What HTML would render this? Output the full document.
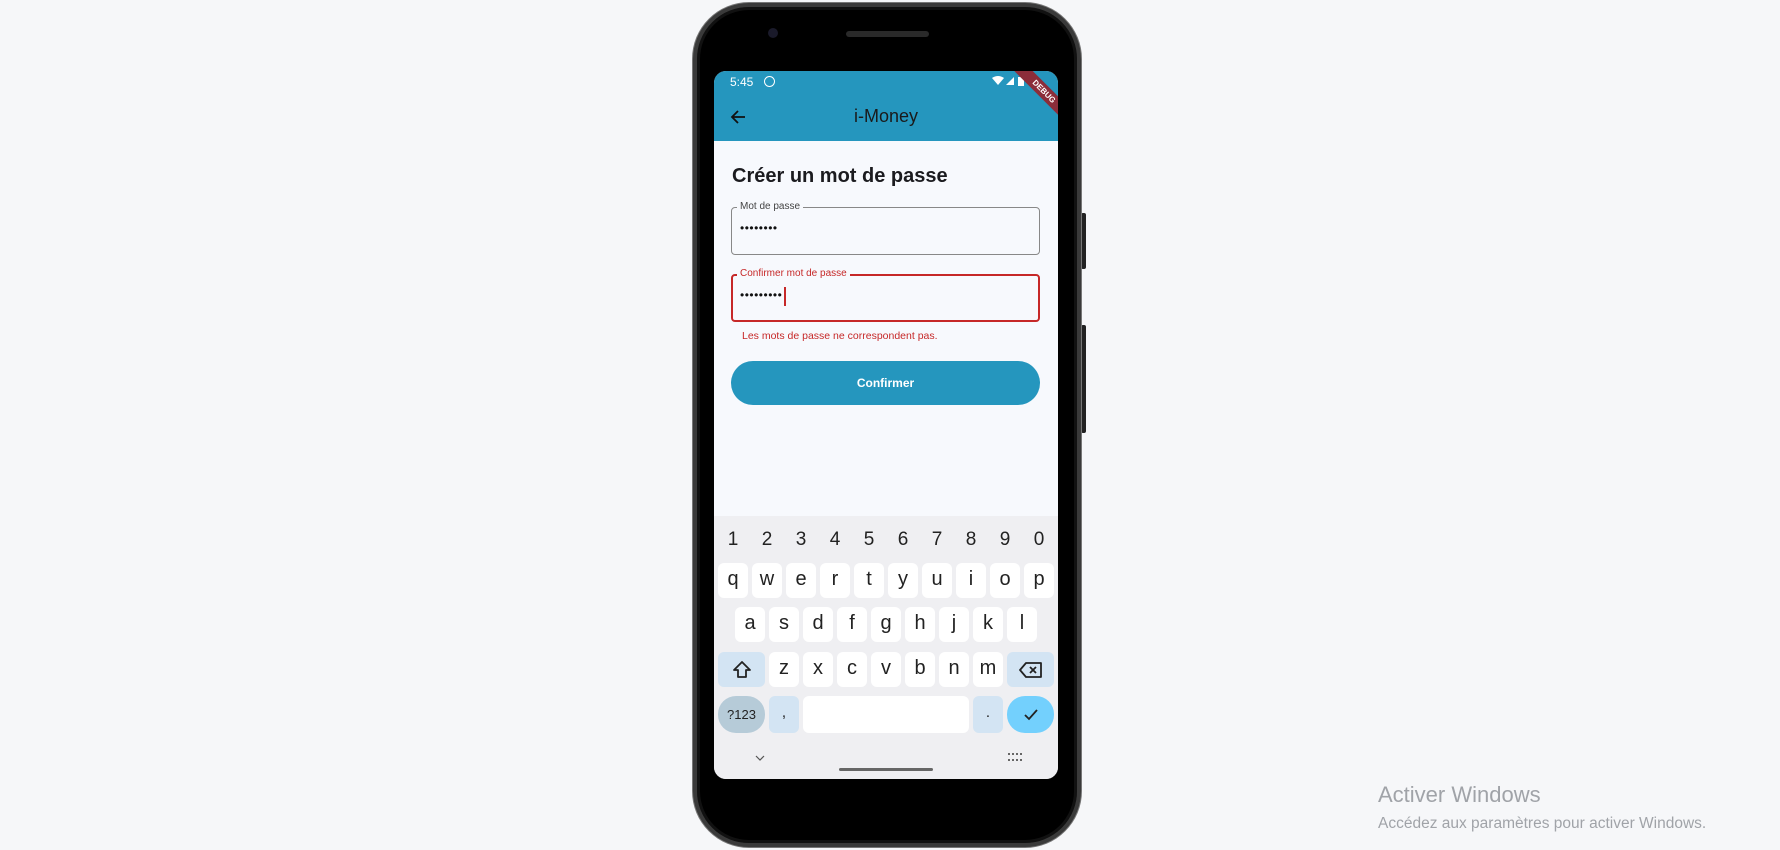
<!DOCTYPE html>
<html><head><meta charset="utf-8"><style>
*{margin:0;padding:0;box-sizing:border-box}
body{width:1780px;height:850px;background:#f6f7f9;font-family:"Liberation Sans",Roboto,sans-serif;position:relative;overflow:hidden}
.abs{position:absolute}
.phone{left:693px;top:3px;width:388px;height:844px;background:#000;border-radius:56px;border:4px solid #3a3a3a;box-shadow:0 0 0 1px #777,0 0 0 3px #111 inset}
.screen{left:714px;top:71px;width:344px;height:708px;background:#f7f9fd;border-radius:12px;overflow:hidden}
.appbar{left:0;top:0;width:344px;height:70px;background:#2596be}
.key{position:absolute;background:#fff;border-radius:6px;width:30px;height:35px;text-align:center;font-size:20px;line-height:33px;color:#222}
.num{position:absolute;top:458px;font-size:19px;color:#222;width:30px;text-align:center}
</style></head><body>
<div class="abs" style="left:1081px;top:213px;width:5px;height:56px;background:#222;border-radius:2px"></div>
<div class="abs" style="left:1081px;top:325px;width:5px;height:108px;background:#222;border-radius:2px"></div>
<div class="abs phone"></div>
<div class="abs" style="left:768px;top:28px;width:10px;height:10px;border-radius:50%;background:#1a1a2a"></div>
<div class="abs" style="left:846px;top:31px;width:83px;height:6px;border-radius:3px;background:#2a2a2a"></div>
<div class="abs screen">
 <div class="abs appbar">
  <div class="abs" style="left:16px;top:4px;color:#fff;font-size:12px">5:45</div>
  <div class="abs" style="left:50px;top:5px;width:11px;height:11px;border:1.5px solid #fff;border-radius:50%"></div>
  <svg class="abs" style="left:278px;top:4px" width="44" height="12"><path d="M0 3 Q6 -1 12 3 L6 10Z" fill="#fff"/><path d="M14 10 L22 2 V10Z" fill="#fff"/><rect x="26" y="2" width="6" height="9" fill="#fff"/></svg>
  <div class="abs" style="left:290px;top:14px;width:80px;height:13px;background:#8b2d3a;transform:rotate(45deg);color:#fff;font-size:8px;font-weight:bold;text-align:center;line-height:13px">DEBUG</div>
  <svg class="abs" style="left:15px;top:37px" width="18" height="18"><path d="M16 9H3M9 3L3 9l6 6" stroke="#111" stroke-width="1.8" fill="none"/></svg>
  <div class="abs" style="left:0;width:344px;top:35px;text-align:center;font-size:18px;color:#1a1a1a">i-Money</div>
 </div>
 <div class="abs" style="left:18px;top:94px;font-size:20px;font-weight:bold;color:#1b1b1f">Créer un mot de passe</div>
 <div class="abs" style="left:17px;top:136px;width:309px;height:48px;border:1px solid #888;border-radius:4px"></div>
 <div class="abs" style="left:23px;top:130px;padding:0 3px;background:#f7f9fd;font-size:10px;color:#444">Mot de passe</div>
 <div class="abs" style="left:26px;top:150px;font-size:12px;color:#111;letter-spacing:0.5px">••••••••</div>
 <div class="abs" style="left:17px;top:203px;width:309px;height:48px;border:2px solid #c62828;border-radius:4px"></div>
 <div class="abs" style="left:23px;top:197px;padding:0 3px;background:#f7f9fd;font-size:10px;color:#c62828">Confirmer mot de passe</div>
 <div class="abs" style="left:26px;top:217px;font-size:12px;color:#111;letter-spacing:0.5px">•••••••••</div>
 <div class="abs" style="left:70px;top:216px;width:1.5px;height:19px;background:#c62828"></div>
 <div class="abs" style="left:28px;top:259px;font-size:10.5px;color:#c62828">Les mots de passe ne correspondent pas.</div>
 <div class="abs" style="left:17px;top:290px;width:309px;height:44px;border-radius:22px;background:#2596be;color:#fff;font-size:12px;font-weight:bold;text-align:center;line-height:44px">Confirmer</div>
 <div class="abs" style="left:0;top:445px;width:344px;height:263px;background:#efeff2"></div>
 <div class="abs" style="left:0;top:0;width:344px;height:708px">
  <div class="num" style="left:4px">1</div><div class="num" style="left:38px">2</div><div class="num" style="left:72px">3</div><div class="num" style="left:106px">4</div><div class="num" style="left:140px">5</div><div class="num" style="left:174px">6</div><div class="num" style="left:208px">7</div><div class="num" style="left:242px">8</div><div class="num" style="left:276px">9</div><div class="num" style="left:310px">0</div>
  <div class="key" style="left:4px;top:492px">q</div><div class="key" style="left:38px;top:492px">w</div><div class="key" style="left:72px;top:492px">e</div><div class="key" style="left:106px;top:492px">r</div><div class="key" style="left:140px;top:492px">t</div><div class="key" style="left:174px;top:492px">y</div><div class="key" style="left:208px;top:492px">u</div><div class="key" style="left:242px;top:492px">i</div><div class="key" style="left:276px;top:492px">o</div><div class="key" style="left:310px;top:492px">p</div>
  <div class="key" style="left:21px;top:536px">a</div><div class="key" style="left:55px;top:536px">s</div><div class="key" style="left:89px;top:536px">d</div><div class="key" style="left:123px;top:536px">f</div><div class="key" style="left:157px;top:536px">g</div><div class="key" style="left:191px;top:536px">h</div><div class="key" style="left:225px;top:536px">j</div><div class="key" style="left:259px;top:536px">k</div><div class="key" style="left:293px;top:536px">l</div>
  <div class="key" style="left:4px;top:581px;width:47px;background:#d3e4f3"><svg width="22" height="22" style="margin-top:7px"><path d="M11 3L3 11h4v7h8v-7h4z" fill="none" stroke="#222" stroke-width="1.8" stroke-linejoin="round"/></svg></div>
  <div class="key" style="left:55px;top:581px">z</div><div class="key" style="left:89px;top:581px">x</div><div class="key" style="left:123px;top:581px">c</div><div class="key" style="left:157px;top:581px">v</div><div class="key" style="left:191px;top:581px">b</div><div class="key" style="left:225px;top:581px">n</div><div class="key" style="left:259px;top:581px">m</div>
  <div class="key" style="left:293px;top:581px;width:47px;background:#d3e4f3"><svg width="24" height="18" style="margin-top:9px"><path d="M7 2h15v14H7L1 9z" fill="none" stroke="#222" stroke-width="1.8" stroke-linejoin="round"/><path d="M11 6l6 6M17 6l-6 6" stroke="#222" stroke-width="1.8"/></svg></div>
  <div class="key" style="left:4px;top:625px;width:47px;height:37px;border-radius:18px;background:#b6cbd8;font-size:13px;line-height:37px">?123</div>
  <div class="key" style="left:55px;top:625px;height:37px;background:#d3e4f3;font-size:15px">,</div>
  <div class="key" style="left:89px;top:625px;width:166px;height:37px"></div>
  <div class="key" style="left:259px;top:625px;height:37px;background:#d3e4f3;font-size:15px">.</div>
  <div class="key" style="left:293px;top:625px;width:47px;height:37px;border-radius:18px;background:#73d0fd"><svg width="18" height="18" style="margin-top:10px"><path d="M3 9l4 4 8-9" fill="none" stroke="#222" stroke-width="1.8"/></svg></div>
  <svg class="abs" style="left:41px;top:683px" width="10" height="8"><path d="M1 2l4 4 4-4" fill="none" stroke="#555" stroke-width="1.2"/></svg>
  <div class="abs" style="left:125px;top:697px;width:94px;height:3px;border-radius:2px;background:#666"></div>
  <div class="abs" style="left:294px;top:682px;width:14px;height:8px;border-top:2px dotted #666;border-bottom:2px dotted #666"></div>
 </div>
</div>
<div class="abs" style="left:1378px;top:782px;font-size:22px;color:#a0a3a8">Activer Windows</div>
<div class="abs" style="left:1378px;top:815px;font-size:15.5px;color:#a0a3a8">Accédez aux paramètres pour activer Windows.</div>
</body></html>
